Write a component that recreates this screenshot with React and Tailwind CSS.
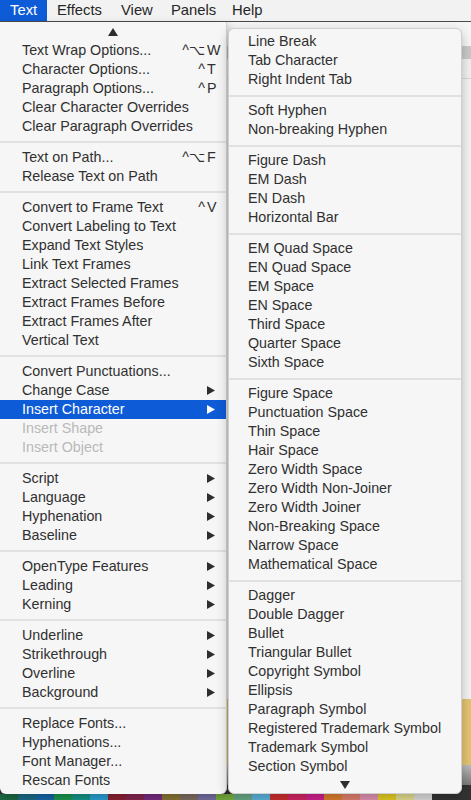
import React from 'react';

const LEFT = [
  [
    { t: 'Text Wrap Options...', mod: '^⌥', key: 'W' },
    { t: 'Character Options...', mod: '^', key: 'T' },
    { t: 'Paragraph Options...', mod: '^', key: 'P' },
    { t: 'Clear Character Overrides' },
    { t: 'Clear Paragraph Overrides' },
  ],
  [
    { t: 'Text on Path...', mod: '^⌥', key: 'F' },
    { t: 'Release Text on Path' },
  ],
  [
    { t: 'Convert to Frame Text', mod: '^', key: 'V' },
    { t: 'Convert Labeling to Text' },
    { t: 'Expand Text Styles' },
    { t: 'Link Text Frames' },
    { t: 'Extract Selected Frames' },
    { t: 'Extract Frames Before' },
    { t: 'Extract Frames After' },
    { t: 'Vertical Text' },
  ],
  [
    { t: 'Convert Punctuations...' },
    { t: 'Change Case', sub: true },
    { t: 'Insert Character', sub: true, on: true },
    { t: 'Insert Shape', off: true },
    { t: 'Insert Object', off: true },
  ],
  [
    { t: 'Script', sub: true },
    { t: 'Language', sub: true },
    { t: 'Hyphenation', sub: true },
    { t: 'Baseline', sub: true },
  ],
  [
    { t: 'OpenType Features', sub: true },
    { t: 'Leading', sub: true },
    { t: 'Kerning', sub: true },
  ],
  [
    { t: 'Underline', sub: true },
    { t: 'Strikethrough', sub: true },
    { t: 'Overline', sub: true },
    { t: 'Background', sub: true },
  ],
  [
    { t: 'Replace Fonts...' },
    { t: 'Hyphenations...' },
    { t: 'Font Manager...' },
    { t: 'Rescan Fonts' },
  ],
];

const RIGHT = [
  ['Line Break', 'Tab Character', 'Right Indent Tab'],
  ['Soft Hyphen', 'Non-breaking Hyphen'],
  ['Figure Dash', 'EM Dash', 'EN Dash', 'Horizontal Bar'],
  ['EM Quad Space', 'EN Quad Space', 'EM Space', 'EN Space', 'Third Space', 'Quarter Space', 'Sixth Space'],
  [
    'Figure Space', 'Punctuation Space', 'Thin Space', 'Hair Space', 'Zero Width Space',
    'Zero Width Non-Joiner', 'Zero Width Joiner', 'Non-Breaking Space', 'Narrow Space', 'Mathematical Space',
  ],
  [
    'Dagger', 'Double Dagger', 'Bullet', 'Triangular Bullet', 'Copyright Symbol', 'Ellipsis',
    'Paragraph Symbol', 'Registered Trademark Symbol', 'Trademark Symbol', 'Section Symbol',
  ],
];

const SWATCHES = [
  '#1d6a44', '#1b6c88', '#1767a8', '#1b9850', '#17978a', '#2aa1d6', '#8c2132', '#862550',
  '#7a2c82', '#8a7634', '#7e6e62', '#7670a2', '#78b03e', '#6aa988', '#5cb6df', '#cf2f2f',
  '#d22563', '#d0228f', '#df7f2f', '#e2806f', '#e393b3', '#e6cf22', '#e6df92', '#dedede',
];

function Sep() {
  return (
    <div className="h-[12px] flex items-center">
      <div className="h-[2px] w-full bg-[#e1e1e1]" />
    </div>
  );
}

function Arrow({ dir, fill = '#2e2e2e' }) {
  if (dir === 'right')
    return (
      <svg width="8" height="9" viewBox="0 0 8 9">
        <path d="M0 0 L8 4.5 L0 9 Z" fill={fill} />
      </svg>
    );
  if (dir === 'up')
    return (
      <svg width="10" height="8" viewBox="0 0 10 8">
        <path d="M0 8 L5 0 L10 8 Z" fill={fill} />
      </svg>
    );
  return (
    <svg width="10" height="8" viewBox="0 0 10 8">
      <path d="M0 0 L10 0 L5 8 Z" fill={fill} />
    </svg>
  );
}

function LeftRow({ item }) {
  const color = item.on ? 'bg-[#0d5bd6] text-white' : item.off ? 'text-[#b9b9b9]' : 'text-[#303030]';
  return (
    <div className={`h-[19px] flex items-center pl-[22px] pr-[5px] ${color}`}>
      <span className="flex-1 whitespace-nowrap pb-[1px]">{item.t}</span>
      {item.key && (
        <span className="flex pb-[1px]">
          <span className="pr-[2px]">{item.mod}</span>
          <span className="w-[14px]">{item.key}</span>
        </span>
      )}
      {item.sub && (
        <span className="w-[14px] flex items-center">
          <Arrow dir="right" fill={item.on ? '#ffffff' : '#2e2e2e'} />
        </span>
      )}
    </div>
  );
}

export default function App() {
  return (
    <div className="relative w-[471px] h-[800px] overflow-hidden flex flex-col bg-[#efefef] font-['Liberation_Sans',Arial,sans-serif] text-[14.3px] leading-none">
      {/* menu bar */}
      <div className="h-[22px] flex items-stretch bg-[#f2f2f2] border-b border-[#4a4a4a] text-[14.8px] text-[#262626]">
        <span className="w-[47px] pl-[10px] pb-[1px] flex items-center bg-[#0d5bd6] text-white">Text</span>
        <span className="w-[74px] pl-[10px] pb-[1px] flex items-center">Effects</span>
        <span className="w-[50px] pb-[1px] flex items-center">View</span>
        <span className="w-[61px] pb-[1px] flex items-center">Panels</span>
        <span className="pb-[1px] flex items-center">Help</span>
      </div>

      {/* window content behind the menus */}
      <div className="flex-1 flex flex-col">
        <div className="h-[24px] bg-[#f6f6f6]" />
        <div className="h-[13px] bg-[#cacaca]" />
        <div className="h-[15px] bg-[#f1f1f1]" />
        <div className="h-[5px] bg-[#f1f1f1] border-b border-[#d8d8d8]" />
        <div className="flex-1 bg-[#f4f4f4]" />
        <div className="h-[66px] bg-[#e4c470]" />
        <div className="h-[20px] bg-gradient-to-b from-[#bdbdbd] to-[#7a7a7a]" />
        <div className="h-[9px] bg-[#333333]" />
      </div>

      {/* colour swatches */}
      <div className="h-[6px] flex">
        {SWATCHES.map((c, i) => (
          <div key={i} className="w-[18px] h-full" style={{ backgroundColor: c }} />
        ))}
        <div className="flex-1 bg-[#333333]" />
      </div>

      {/* Text menu */}
      <div className="absolute left-0 top-[22px] w-[227px] pb-[4px] bg-[#f6f6f6] border-r border-[#d3d3d3] rounded-b-[6px] shadow-[2px_4px_10px_rgba(0,0,0,0.25)]">
        <div className="h-[19px] flex items-center justify-center">
          <Arrow dir="up" />
        </div>
        {LEFT.map((group, gi) => (
          <div key={gi}>
            {gi > 0 && <Sep />}
            {group.map((item) => (
              <LeftRow key={item.t} item={item} />
            ))}
          </div>
        ))}
      </div>

      {/* Insert Character submenu */}
      <div className="absolute left-[228px] top-[28px] w-[234px] pt-[4px] bg-[#f6f6f6] border border-[#cfcfcf] rounded-[6px] shadow-[0_4px_12px_rgba(0,0,0,0.25)] text-[#303030]">
        {RIGHT.map((group, gi) => (
          <div key={gi}>
            {gi > 0 && <Sep />}
            {group.map((t) => (
              <div key={t} className="h-[19px] flex items-center pl-[19px] pb-[3px] whitespace-nowrap">
                {t}
              </div>
            ))}
          </div>
        ))}
        <div className="h-[16px] flex items-start pt-[4px] justify-center">
          <Arrow dir="down" />
        </div>
      </div>
    </div>
  );
}
